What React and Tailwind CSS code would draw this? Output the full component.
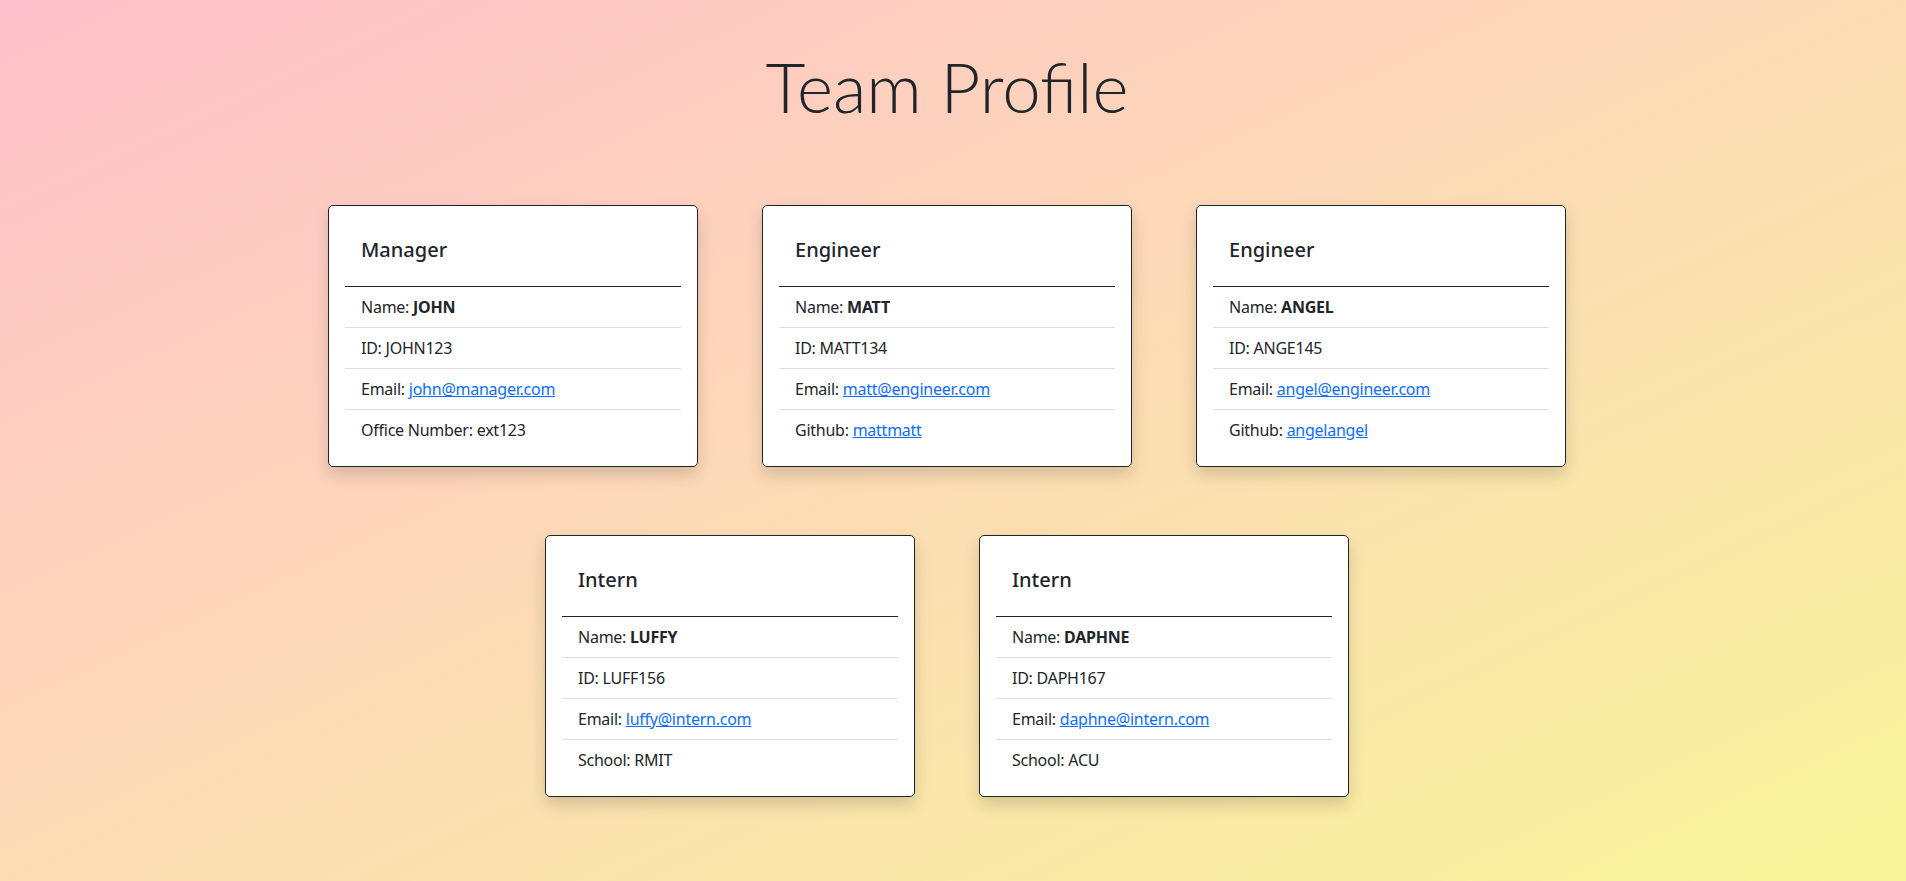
import React from 'react';

const team = [
  [
    {
      role: 'Manager',
      name: 'JOHN',
      id: 'JOHN123',
      email: 'john@manager.com',
      extra: { label: 'Office Number', value: 'ext123' },
    },
    {
      role: 'Engineer',
      name: 'MATT',
      id: 'MATT134',
      email: 'matt@engineer.com',
      extra: { label: 'Github', value: 'mattmatt', link: true },
    },
    {
      role: 'Engineer',
      name: 'ANGEL',
      id: 'ANGE145',
      email: 'angel@engineer.com',
      extra: { label: 'Github', value: 'angelangel', link: true },
    },
  ],
  [
    {
      role: 'Intern',
      name: 'LUFFY',
      id: 'LUFF156',
      email: 'luffy@intern.com',
      extra: { label: 'School', value: 'RMIT' },
    },
    {
      role: 'Intern',
      name: 'DAPHNE',
      id: 'DAPH167',
      email: 'daphne@intern.com',
      extra: { label: 'School', value: 'ACU' },
    },
  ],
];

const Link = ({ children }) => (
  <a href="#" className="text-[#0d6efd] underline">
    {children}
  </a>
);

const ProfileCard = ({ member }) => {
  return (
    <div className="w-[370px] bg-white border border-[#212529] rounded-[5px] shadow-[0_8px_16px_rgba(0,0,0,0.15)]">
      <div className="p-4">
        {/* Header */}
        <div className="px-4 pt-4 pb-4 border-b border-[#212529]">
          <h5 className="text-[20px] leading-[24px] font-medium mb-2">{member.role}</h5>
        </div>

        {/* Details */}
        <ul className="tracking-[-0.25px]">
          <li className="px-4 py-2 border-b border-[#dfdfdf] leading-6">
            Name: <b className="font-bold">{member.name}</b>
          </li>
          <li className="px-4 py-2 border-b border-[#dfdfdf] leading-6">ID: {member.id}</li>
          <li className="px-4 py-2 border-b border-[#dfdfdf] leading-6">
            Email: <Link>{member.email}</Link>
          </li>
          <li className="px-4 py-2 leading-6">
            {member.extra.label}:{' '}
            {member.extra.link ? <Link>{member.extra.value}</Link> : member.extra.value}
          </li>
        </ul>
      </div>
    </div>
  );
};

export default function App() {
  return (
    <div
      className="min-h-screen bg-linear-to-br from-[#ffc0cb] to-[#f7f598] text-[#212529] text-[16px] pr-[12px] pt-[44px]"
      style={{ fontFamily: '"Noto Sans", "Open Sans", sans-serif' }}
    >
      <h1
        className="text-center text-[69px] h-[86px] leading-[86px] font-light"
        style={{ fontFamily: 'Lato, "Open Sans", sans-serif' }}
      >
        Team Profile
      </h1>

      <div className="flex flex-col items-center gap-[68px] mt-[75px] pb-10">
        {team.map((row, i) => (
          <div key={i} className="flex justify-center gap-[64px]">
            {row.map((m) => (
              <ProfileCard key={m.id} member={m} />
            ))}
          </div>
        ))}
      </div>
    </div>
  );
}
